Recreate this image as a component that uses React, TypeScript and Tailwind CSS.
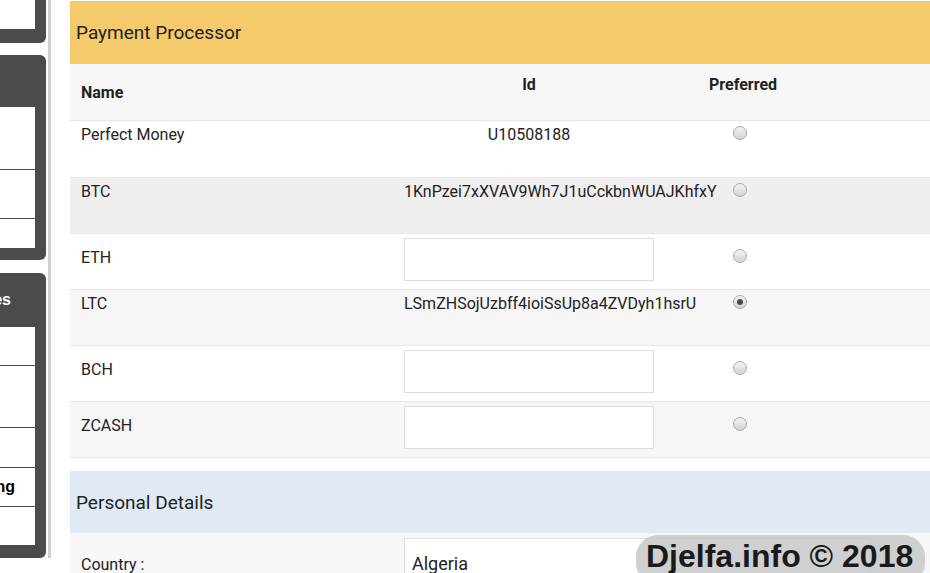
import React from 'react'

type Processor = {
  name: string
  id?: string
  checked?: boolean
  bg: string
}

const processors: Processor[] = [
  { name: 'Perfect Money', id: 'U10508188', bg: 'bg-white' },
  { name: 'BTC', id: '1KnPzei7xXVAV9Wh7J1uCckbnWUAJKhfxY', bg: 'bg-[#efefef]' },
  { name: 'ETH', bg: 'bg-white' },
  { name: 'LTC', id: 'LSmZHSojUzbff4ioiSsUp8a4ZVDyh1hsrU', checked: true, bg: 'bg-[#f6f6f6]' },
  { name: 'BCH', bg: 'bg-white' },
  { name: 'ZCASH', bg: 'bg-[#f6f6f6]' },
]

function Radio({ checked }: { checked?: boolean }) {
  return (
    <span className="flex h-[14px] w-[14px] items-center justify-center rounded-full border border-[#a9a9a9] bg-gradient-to-b from-[#f2f2f2] to-[#d4d4d4]">
      {checked && <span className="h-[6px] w-[6px] rounded-full bg-[#4a4a4a]" />}
    </span>
  )
}

function Sidebar() {
  return (
    <div className="flex w-[46px] shrink-0 flex-col items-end overflow-hidden font-['Liberation_Sans',Arial,sans-serif] text-[16px] font-bold">
      {/* top panel */}
      <div className="w-[220px] shrink-0 rounded-br-[6px] bg-[#4b4b4b] pr-[11px] pb-[14px]">
        <div className="h-[29px] bg-white" />
      </div>

      {/* second panel */}
      <div className="mt-[12px] w-[220px] shrink-0 rounded-r-[6px] bg-[#4b4b4b] pb-[12px]">
        <div className="h-[52px]" />
        <div className="mr-[11px] bg-white">
          <div className="h-[63px] border-b border-[#4b4b4b]" />
          <div className="h-[49px] border-b border-[#4b4b4b]" />
          <div className="h-[29px]" />
        </div>
      </div>

      {/* third panel */}
      <div className="mt-[13px] w-[220px] shrink-0 rounded-r-[6px] bg-[#4b4b4b] pb-[13px]">
        <div className="flex h-[54px] items-center justify-end pr-[35px] text-white">Categories</div>
        <div className="mr-[11px] bg-white text-black">
          <div className="h-[39px] border-b border-[#4b4b4b]" />
          <div className="h-[62px] border-b border-[#4b4b4b]" />
          <div className="h-[40px] border-b border-[#4b4b4b]" />
          <div className="flex h-[39px] items-center justify-end border-b border-[#4b4b4b] pr-[20px]">
            Setting
          </div>
          <div className="h-[38px]" />
        </div>
      </div>
    </div>
  )
}

function ProcessorRow({ p, first }: { p: Processor; first: boolean }) {
  const hasId = p.id !== undefined
  return (
    <div className={`flex h-[56px] ${p.bg} ${first ? '' : 'border-t border-[#e8e8e8]'}`}>
      <div className={`w-[334px] shrink-0 pl-[11px] leading-[22px] ${hasId ? 'pt-[3px]' : 'pt-[13px]'}`}>
        {p.name}
      </div>
      <div className="w-[250px] shrink-0">
        {hasId ? (
          <div className="whitespace-nowrap pt-[3px] text-center leading-[22px]">{p.id}</div>
        ) : (
          <div className="mt-[4px] h-[43px] border border-[#dddddd] bg-white" />
        )}
      </div>
      <div className={`pl-[79px] ${hasId ? 'pt-[5px]' : 'pt-[15px]'}`}>
        <Radio checked={p.checked} />
      </div>
    </div>
  )
}

export default function App() {
  return (
    <div className="relative flex h-[573px] w-[930px] overflow-hidden bg-white">
      <Sidebar />
      <div className="ml-[2px] h-[558px] w-[3px] shrink-0 bg-[#cfcfcf]" />

      <div className="ml-[19px] flex-1 pt-[1px] font-[Roboto,sans-serif] text-[16px] text-[#222]">
        {/* payment processor */}
        <div className="flex h-[63px] items-center bg-[#f4ca6a] pt-[2px] pl-[6px] text-[19px]">Payment Processor</div>
        <div className="flex h-[57px] border-b border-[#e6e6e6] bg-[#f7f7f7] font-bold leading-[22px]">
          <div className="w-[334px] shrink-0 pt-[18px] pl-[11px]">Name</div>
          <div className="w-[250px] shrink-0 pt-[10px] text-center">Id</div>
          <div className="pt-[10px] pl-[55px]">Preferred</div>
        </div>
        {processors.map((p, i) => (
          <ProcessorRow key={p.name} p={p} first={i === 0} />
        ))}
        <div className="border-t border-[#e6e6e6]" />

        {/* personal details */}
        <div className="mt-[13px] flex h-[62px] items-center bg-[#e0eaf4] pt-[2px] pl-[6px] text-[19px]">Personal Details</div>
        <div className="flex h-[60px] bg-[#f7f7f7]">
          <div className="w-[334px] shrink-0 pt-[21px] pl-[11px] leading-[22px]">Country :</div>
          <div className="mt-[5px] h-[43px] w-[467px] shrink-0 border border-[#dddddd] bg-white pt-[13px] pl-[7px] text-[18px] leading-[24px]">
            Algeria
          </div>
        </div>
      </div>

      {/* watermark */}
      <div className="absolute top-[535px] left-[636px] h-[50px] w-[289px] rounded-[22px] bg-[rgba(196,198,198,0.82)] pt-[5px] pl-[10px] font-['Liberation_Sans',Arial,sans-serif] text-[32px] leading-[32px] font-bold whitespace-nowrap text-[#1a1a1a]">
        Djelfa.info © 2018
      </div>
    </div>
  )
}
